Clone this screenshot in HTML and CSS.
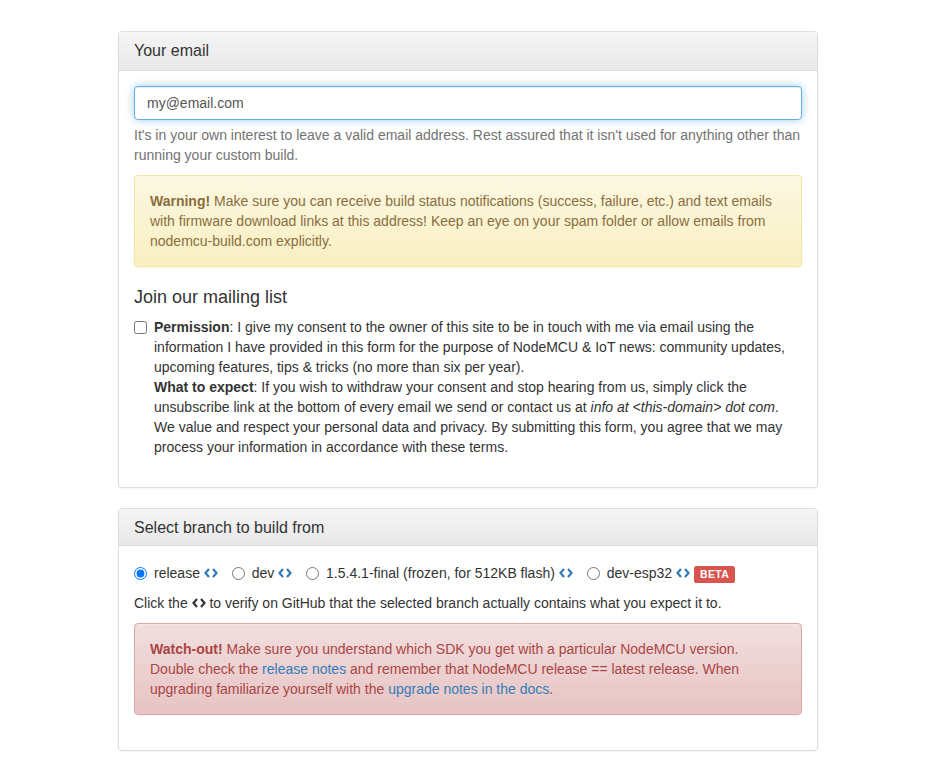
FILE: index.html
```html
<!DOCTYPE html>
<html lang="en">
<head>
<meta charset="utf-8">
<title>NodeMCU custom builds</title>
<link rel="stylesheet" href="styles.css">
</head>
<body>
<div class="wrap">
  <div class="panel">
    <div class="panel-heading"><h3 class="panel-title">Your email</h3></div>
    <div class="panel-body">
      <input class="form-control focused" type="email" value="my@email.com">
      <p class="help-block">It's in your own interest to leave a valid email address. Rest assured that it isn't used for anything other than running your custom build.</p>
      <div class="alert alert-warning"><strong>Warning!</strong> Make sure you can receive build status notifications (success, failure, etc.) and text emails with firmware download links at this address! Keep an eye on your spam folder or allow emails from nodemcu-build.com explicitly.</div>
      <h4 class="sub">Join our mailing list</h4>
      <div class="form-group">
        <div class="checkbox">
          <label><input type="checkbox"><strong>Permission</strong>: I give my consent to the owner of this site to be in touch with me via email using the information I have provided in this form for the purpose of NodeMCU &amp; IoT news: community updates, upcoming features, tips &amp; tricks (no more than six per year).<br><strong>What to expect</strong>: If you wish to withdraw your consent and stop hearing from us, simply click the unsubscribe link at the bottom of every email we send or contact us at <em>info at &lt;this-domain&gt; dot com</em>. We value and respect your personal data and privacy. By submitting this form, you agree that we may process your information in accordance with these terms.</label>
        </div>
      </div>
    </div>
  </div>

  <div class="panel">
    <div class="panel-heading tight"><h3 class="panel-title">Select branch to build from</h3></div>
    <div class="panel-body">
      <div class="radios">
        <label class="radio-inline"><input type="radio" name="branch" checked>release <a class="code" href="#"><svg viewBox="0 0 14 12" width="14" height="12"><path d="M5 2 L1.5 6 L5 10 M9 2 L12.5 6 L9 10" fill="none" stroke="currentColor" stroke-width="2.2"/></svg></a></label>
        <label class="radio-inline"><input type="radio" name="branch">dev <a class="code" href="#"><svg viewBox="0 0 14 12" width="14" height="12"><path d="M5 2 L1.5 6 L5 10 M9 2 L12.5 6 L9 10" fill="none" stroke="currentColor" stroke-width="2.2"/></svg></a></label>
        <label class="radio-inline"><input type="radio" name="branch">1.5.4.1-final (frozen, for 512KB flash) <a class="code" href="#"><svg viewBox="0 0 14 12" width="14" height="12"><path d="M5 2 L1.5 6 L5 10 M9 2 L12.5 6 L9 10" fill="none" stroke="currentColor" stroke-width="2.2"/></svg></a></label>
        <label class="radio-inline"><input type="radio" name="branch">dev-esp32 <a class="code" href="#"><svg viewBox="0 0 14 12" width="14" height="12"><path d="M5 2 L1.5 6 L5 10 M9 2 L12.5 6 L9 10" fill="none" stroke="currentColor" stroke-width="2.2"/></svg></a> <span class="label-danger">BETA</span></label>
      </div>
      <p class="para">Click the <span class="code dark"><svg viewBox="0 0 14 12" width="14" height="12"><path d="M5 2 L1.5 6 L5 10 M9 2 L12.5 6 L9 10" fill="none" stroke="currentColor" stroke-width="2.2"/></svg></span> to verify on GitHub that the selected branch actually contains what you expect it to.</p>
      <div class="alert alert-danger"><strong>Watch-out!</strong> Make sure you understand which SDK you get with a particular NodeMCU version. Double check the <a href="#">release notes</a> and remember that NodeMCU release == latest release. When upgrading familiarize yourself with the <a href="#">upgrade notes in the docs</a>.</div>
    </div>
  </div>
</div>
</body>
</html>
```

FILE: styles.css
```css
* { box-sizing: border-box; }
html, body { margin: 0; padding: 0; background: #fff; }
body {
  font-family: "Liberation Sans", Arial, Helvetica, sans-serif;
  font-size: 14px;
  line-height: 20px;
  color: #333;
}
a { color: #337ab7; text-decoration: none; }
.wrap { width: 700px; margin: 31px 0 0 118px; }
.panel {
  background: #fff;
  border: 1px solid #ddd;
  border-radius: 4px;
  box-shadow: 0 1px 2px rgba(0,0,0,.05);
  margin-bottom: 20px;
}
.panel-heading {
  padding: 10px 15px;
  border-bottom: 1px solid #ddd;
  border-radius: 3px 3px 0 0;
  background: linear-gradient(to bottom, #f5f5f5 0, #e8e8e8 100%);
  color: #333;
}
.panel-heading.tight { padding-bottom: 9px; }
.panel-title { margin: 0; font-size: 16px; font-weight: 500; line-height: 1.1; }
.panel-body { padding: 15px; }
.form-control {
  display: block;
  width: 100%;
  height: 34px;
  padding: 6px 12px;
  font-family: inherit;
  font-size: 14px;
  line-height: 20px;
  color: #555;
  background: #fff;
  border: 1px solid #ccc;
  border-radius: 4px;
  box-shadow: inset 0 1px 1px rgba(0,0,0,.075);
  outline: 0;
}
.form-control.focused {
  border-color: #66afe9;
  box-shadow: inset 0 1px 1px rgba(0,0,0,.075), 0 0 8px rgba(102,175,233,.6);
}
.help-block { margin: 5px 0 10px; color: #737373; }
.alert {
  padding: 15px;
  margin-bottom: 20px;
  border: 1px solid transparent;
  border-radius: 4px;
  box-shadow: inset 0 1px 0 rgba(255,255,255,.25), 0 1px 2px rgba(0,0,0,.05);
  text-shadow: 0 1px 0 rgba(255,255,255,.2);
}
.alert-warning {
  color: #8a6d3b;
  background: linear-gradient(to bottom, #fcf8e3 0, #f8efc0 100%);
  border-color: #f5e79e;
}
.alert-danger {
  color: #a94442;
  background: linear-gradient(to bottom, #f2dede 0, #e7c3c3 100%);
  border-color: #dca7a7;
}
.sub { font-size: 18px; font-weight: 500; line-height: 20.2px; margin: 10px 0 10px; }
.form-group { margin-bottom: 15px; }
.checkbox { margin: 10px 0; }
.checkbox label { display: block; padding-left: 20px; font-weight: 400; }
.checkbox input {
  float: left;
  margin: 4px 0 0 -20px;
  width: 13px;
  height: 13px;
}
.radios { margin-bottom: 10px; }
.radio-inline {
  display: inline-block;
  position: relative;
  padding-left: 20px;
  vertical-align: middle;
}
.radio-inline + .radio-inline { margin-left: 10px; }
.radio-inline input {
  position: absolute;
  margin: 4px 0 0 -20px;
  width: 13px;
  height: 13px;
}
.code { display: inline-block; vertical-align: -1px; line-height: 1; }
.code svg { display: block; }
.code.dark { color: #333; }
.label-danger {
  display: inline;
  padding: .2em .6em .3em;
  font-size: 75%;
  font-weight: 700;
  line-height: 1;
  color: #fff;
  background: #d9534f;
  border-radius: .25em;
  letter-spacing: .3px;
  vertical-align: baseline;
}
.para { margin: 0 0 10px; }
```
